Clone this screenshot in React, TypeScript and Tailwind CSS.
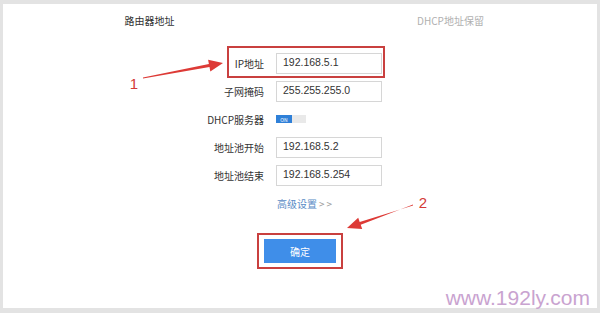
const labelFont = { fontFamily: '"Noto Sans CJK SC", "Liberation Sans", sans-serif' };

function FieldRow({ label, value }: { label: string; value: string }) {
  return (
    <div className="flex h-[28px] items-center">
      <span className="w-[100px] text-right text-[10px] text-[#333]">{label}</span>
      <div className="ml-[12px] flex h-[21px] w-[106px] items-center border border-[#d6d6d6] bg-white pl-[6px] text-[10.5px] text-[#333]">
        <span style={{ fontFamily: '"Liberation Sans", sans-serif' }}>{value}</span>
      </div>
    </div>
  );
}

export default function App() {
  return (
    <div className="relative h-[313px] w-[600px] overflow-hidden bg-[#e3e3e3] pb-[5px] pl-[3px] pr-[3px] pt-[4px]" style={labelFont}>
      <div className="flex h-full flex-col bg-white">
        <div className="flex h-[33px] items-center text-[10px]">
          <div className="flex-1 pr-[8px] text-center text-[#333]">路由器地址</div>
          <div className="flex-1 text-center text-[#b0b0b0]">DHCP地址保留</div>
        </div>

        <div className="mt-[12px] flex flex-col pl-[161px]">
          <FieldRow label="IP地址" value="192.168.5.1" />
          <FieldRow label="子网掩码" value="255.255.255.0" />
          <div className="flex h-[28px] items-center">
            <span className="w-[100px] text-right text-[10px] text-[#333]">DHCP服务器</span>
            <div className="ml-[12px] flex h-[8px] w-[30px]">
              <div className="flex w-[16px] items-center justify-center bg-[#2f80d8] text-[5px] leading-none text-white">ON</div>
              <div className="flex-1 bg-[#e9e9e9]" />
            </div>
          </div>
          <FieldRow label="地址池开始" value="192.168.5.2" />
          <FieldRow label="地址池结束" value="192.168.5.254" />
          <div className="flex h-[28px] items-center pl-[113px] text-[10px]">
            <span className="text-[#5a8cc6]">高级设置</span>
            <span className="ml-[2px] tracking-[2px] text-[#999]">&gt;&gt;</span>
          </div>
        </div>

        <div className="mt-[16px] flex justify-center">
          <div className="border-2 border-[#c9403f] px-[5px] py-[4px]">
            <button className="flex h-[24px] w-[72px] items-center justify-center bg-[#3f8ee9] text-[10px] text-white">
              确定
            </button>
          </div>
        </div>
      </div>

      <div className="absolute left-[227px] top-[46px] h-[32px] w-[158px] border-2 border-[#c9403f]" />

      <svg className="absolute left-0 top-0" width="600" height="313" viewBox="0 0 600 313">
        <polygon points="143,78.5 209.5,67.1 210.3,71.5 223,63 208.1,59.7 208.9,64.1 143,77.5" fill="#dd3a36" />
        <polygon points="413,204.5 360.7,224.8 362.2,229.1 347,228 358.2,217.7 359.7,222 413,205.5" fill="#dd3a36" />
        <text x="134" y="89" textAnchor="middle" fontSize="15" fill="#d43a36" fontFamily="Liberation Sans, sans-serif">1</text>
        <text x="423" y="208" textAnchor="middle" fontSize="15" fill="#d43a36" fontFamily="Liberation Sans, sans-serif">2</text>
      </svg>

      <div
        className="absolute bottom-[5px] right-[10px] text-[21px] leading-none text-[#c9a3d0]"
        style={{ fontFamily: '"Liberation Sans", sans-serif' }}
      >
        www.192ly.com
      </div>
    </div>
  );
}
